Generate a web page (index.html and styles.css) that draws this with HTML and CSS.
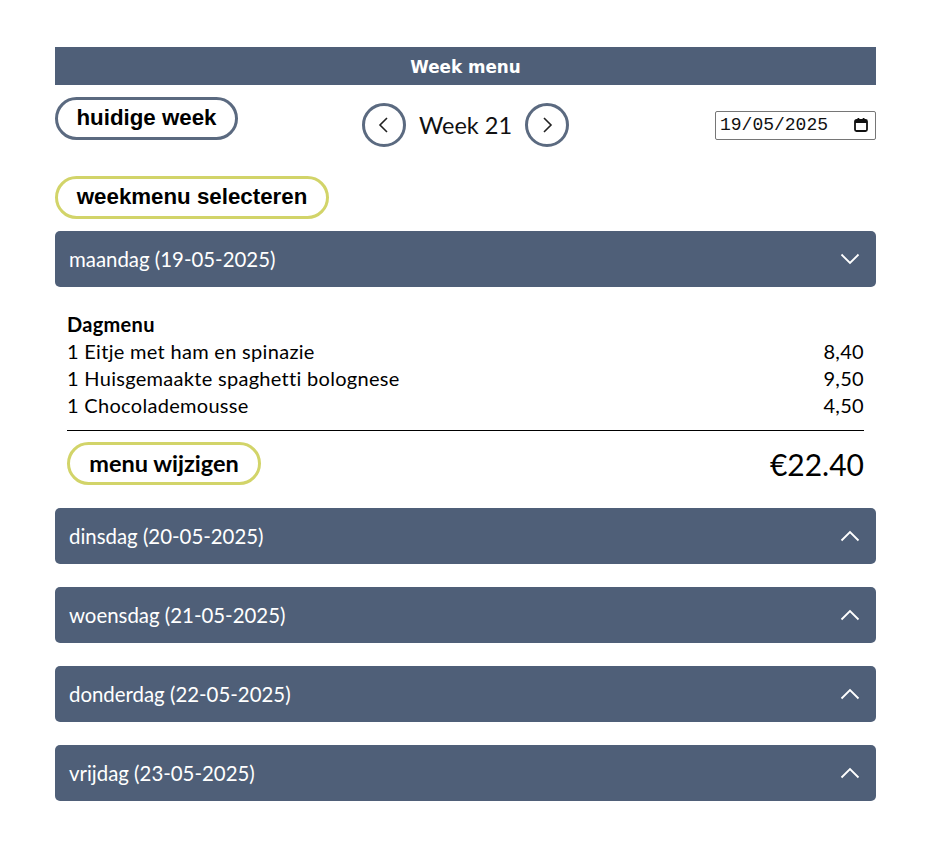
FILE: index.html
```html
<!DOCTYPE html>
<html lang="nl">
<head>
<meta charset="utf-8">
<title>Week menu</title>
<link rel="stylesheet" href="styles.css">
</head>
<body>
<div class="page">
  <div class="titlebar">Week menu</div>

  <div class="toolbar">
    <div class="tb-left"><button class="pill pill-grey">huidige week</button></div>
    <div class="weeknav">
      <button class="circle" aria-label="vorige week">
        <svg width="16" height="18" viewBox="0 0 16 18"><path d="M11 2 L4 9 L11 16" fill="none" stroke="#222" stroke-width="1.6"/></svg>
      </button>
      <span class="weeklabel">Week 21</span>
      <button class="circle" aria-label="volgende week">
        <svg width="16" height="18" viewBox="0 0 16 18"><path d="M5 2 L12 9 L5 16" fill="none" stroke="#222" stroke-width="1.6"/></svg>
      </button>
    </div>
    <div class="tb-right">
      <div class="dateinput">
        <span class="datevalue">19/05/2025</span>
        <svg class="calicon" width="16" height="16" viewBox="0 0 16 16"><rect x="2" y="3" width="12" height="11" rx="1.5" fill="none" stroke="#111" stroke-width="1.8"/><rect x="2" y="3" width="12" height="3" fill="#111"/><rect x="4.5" y="1" width="1.8" height="3" fill="#111"/><rect x="9.7" y="1" width="1.8" height="3" fill="#111"/></svg>
      </div>
    </div>
  </div>

  <div class="selectrow"><button class="pill pill-yellow">weekmenu selecteren</button></div>

  <div class="day">
    <div class="dayhead">
      <span>maandag (19-05-2025)</span>
      <svg class="chev" width="20" height="12" viewBox="0 0 20 12"><path d="M1.5 1.5 L10 10 L18.5 1.5" fill="none" stroke="#fff" stroke-width="1.8"/></svg>
    </div>
    <div class="daybody">
      <div class="menutitle">Dagmenu</div>
      <div class="item"><span>1 Eitje met ham en spinazie</span><span>8,40</span></div>
      <div class="item"><span>1 Huisgemaakte spaghetti bolognese</span><span>9,50</span></div>
      <div class="item"><span>1 Chocolademousse</span><span>4,50</span></div>
      <div class="totalrow">
        <button class="pill pill-yellow pill-cal">menu wijzigen</button>
        <span class="total">€22.40</span>
      </div>
    </div>
  </div>

  <div class="day">
    <div class="dayhead">
      <span>dinsdag (20-05-2025)</span>
      <svg class="chev" width="20" height="12" viewBox="0 0 20 12"><path d="M1.5 10.5 L10 2 L18.5 10.5" fill="none" stroke="#fff" stroke-width="1.8"/></svg>
    </div>
  </div>
  <div class="day">
    <div class="dayhead">
      <span>woensdag (21-05-2025)</span>
      <svg class="chev" width="20" height="12" viewBox="0 0 20 12"><path d="M1.5 10.5 L10 2 L18.5 10.5" fill="none" stroke="#fff" stroke-width="1.8"/></svg>
    </div>
  </div>
  <div class="day">
    <div class="dayhead">
      <span>donderdag (22-05-2025)</span>
      <svg class="chev" width="20" height="12" viewBox="0 0 20 12"><path d="M1.5 10.5 L10 2 L18.5 10.5" fill="none" stroke="#fff" stroke-width="1.8"/></svg>
    </div>
  </div>
  <div class="day">
    <div class="dayhead">
      <span>vrijdag (23-05-2025)</span>
      <svg class="chev" width="20" height="12" viewBox="0 0 20 12"><path d="M1.5 10.5 L10 2 L18.5 10.5" fill="none" stroke="#fff" stroke-width="1.8"/></svg>
    </div>
  </div>
</div>
</body>
</html>
```

FILE: styles.css
```css
* { box-sizing: border-box; }
html, body { margin: 0; padding: 0; background: #fff; }
body { font-family: "Lato", "Open Sans", sans-serif; color: #000; }

.page {
  width: 821px;
  margin: 47px 0 0 55px;
}

.titlebar {
  height: 38px;
  background: #4f5f78;
  color: #fff;
  font-family: "DejaVu Sans", Verdana, sans-serif;
  font-weight: bold;
  font-size: 16.8px;
  display: flex;
  align-items: center;
  justify-content: center;
  padding-top: 2px;
}

.toolbar {
  margin-top: 12px;
  height: 56px;
  display: grid;
  grid-template-columns: 1fr auto 1fr;
  align-items: center;
}
.tb-left { align-self: start; }
.tb-right { display: flex; justify-content: flex-end; }

.pill {
  font-family: "Liberation Sans", Arial, sans-serif;
  font-weight: bold;
  font-size: 22.3px;
  color: #000;
  background: #fff;
  border-radius: 22px;
  height: 43px;
  padding: 0 14px;
  cursor: pointer;
  line-height: 1;
}
.pill-grey { border: 3px solid #5b6a80; width: 183px; }
.pill-yellow { border: 3px solid #d2d469; }
.selectrow { margin-top: 23px; }
.selectrow .pill { width: 274px; }

.weeknav { display: flex; align-items: center; }
.circle {
  width: 44px; height: 44px;
  border-radius: 50%;
  border: 3px solid #5b6a80;
  background: #fff;
  display: flex; align-items: center; justify-content: center;
  padding: 0;
}
.weeklabel {
  font-size: 23.5px;
  margin: 0 13px;
  color: #111;
}

.dateinput {
  width: 161px; height: 29px;
  border: 1px solid #767676;
  border-radius: 2px;
  display: flex; align-items: center; justify-content: space-between;
  padding: 0 6px 0 4px;
}
.datevalue { font-family: "Liberation Mono", "DejaVu Sans Mono", monospace; font-size: 18px; color: #111; }

.day { margin-top: 12px; }
.day + .day { margin-top: 23px; }
.dayhead {
  height: 56px;
  background: #4f5f78;
  border-radius: 5px;
  color: #fff;
  font-size: 20.4px;
  display: flex; align-items: center; justify-content: space-between;
  padding: 0 16px 0 14px;
}

.daybody {
  padding: 24px 12px 0 12px;
  font-size: 20px;
  letter-spacing: 0.3px;
}
.menutitle { font-weight: bold; line-height: 27px; }
.item { display: flex; justify-content: space-between; line-height: 27px; }
.totalrow {
  margin-top: 11px;
  border-top: 1px solid #000;
  padding-top: 11px;
  display: flex; justify-content: space-between; align-items: center;
}
.pill-cal {
  font-family: "Lato", "Open Sans", sans-serif;
  width: 194px;
  font-size: 23.5px;
  letter-spacing: 0;
  padding: 0 10px;
}
.total { font-size: 30px; letter-spacing: 0; }
```
